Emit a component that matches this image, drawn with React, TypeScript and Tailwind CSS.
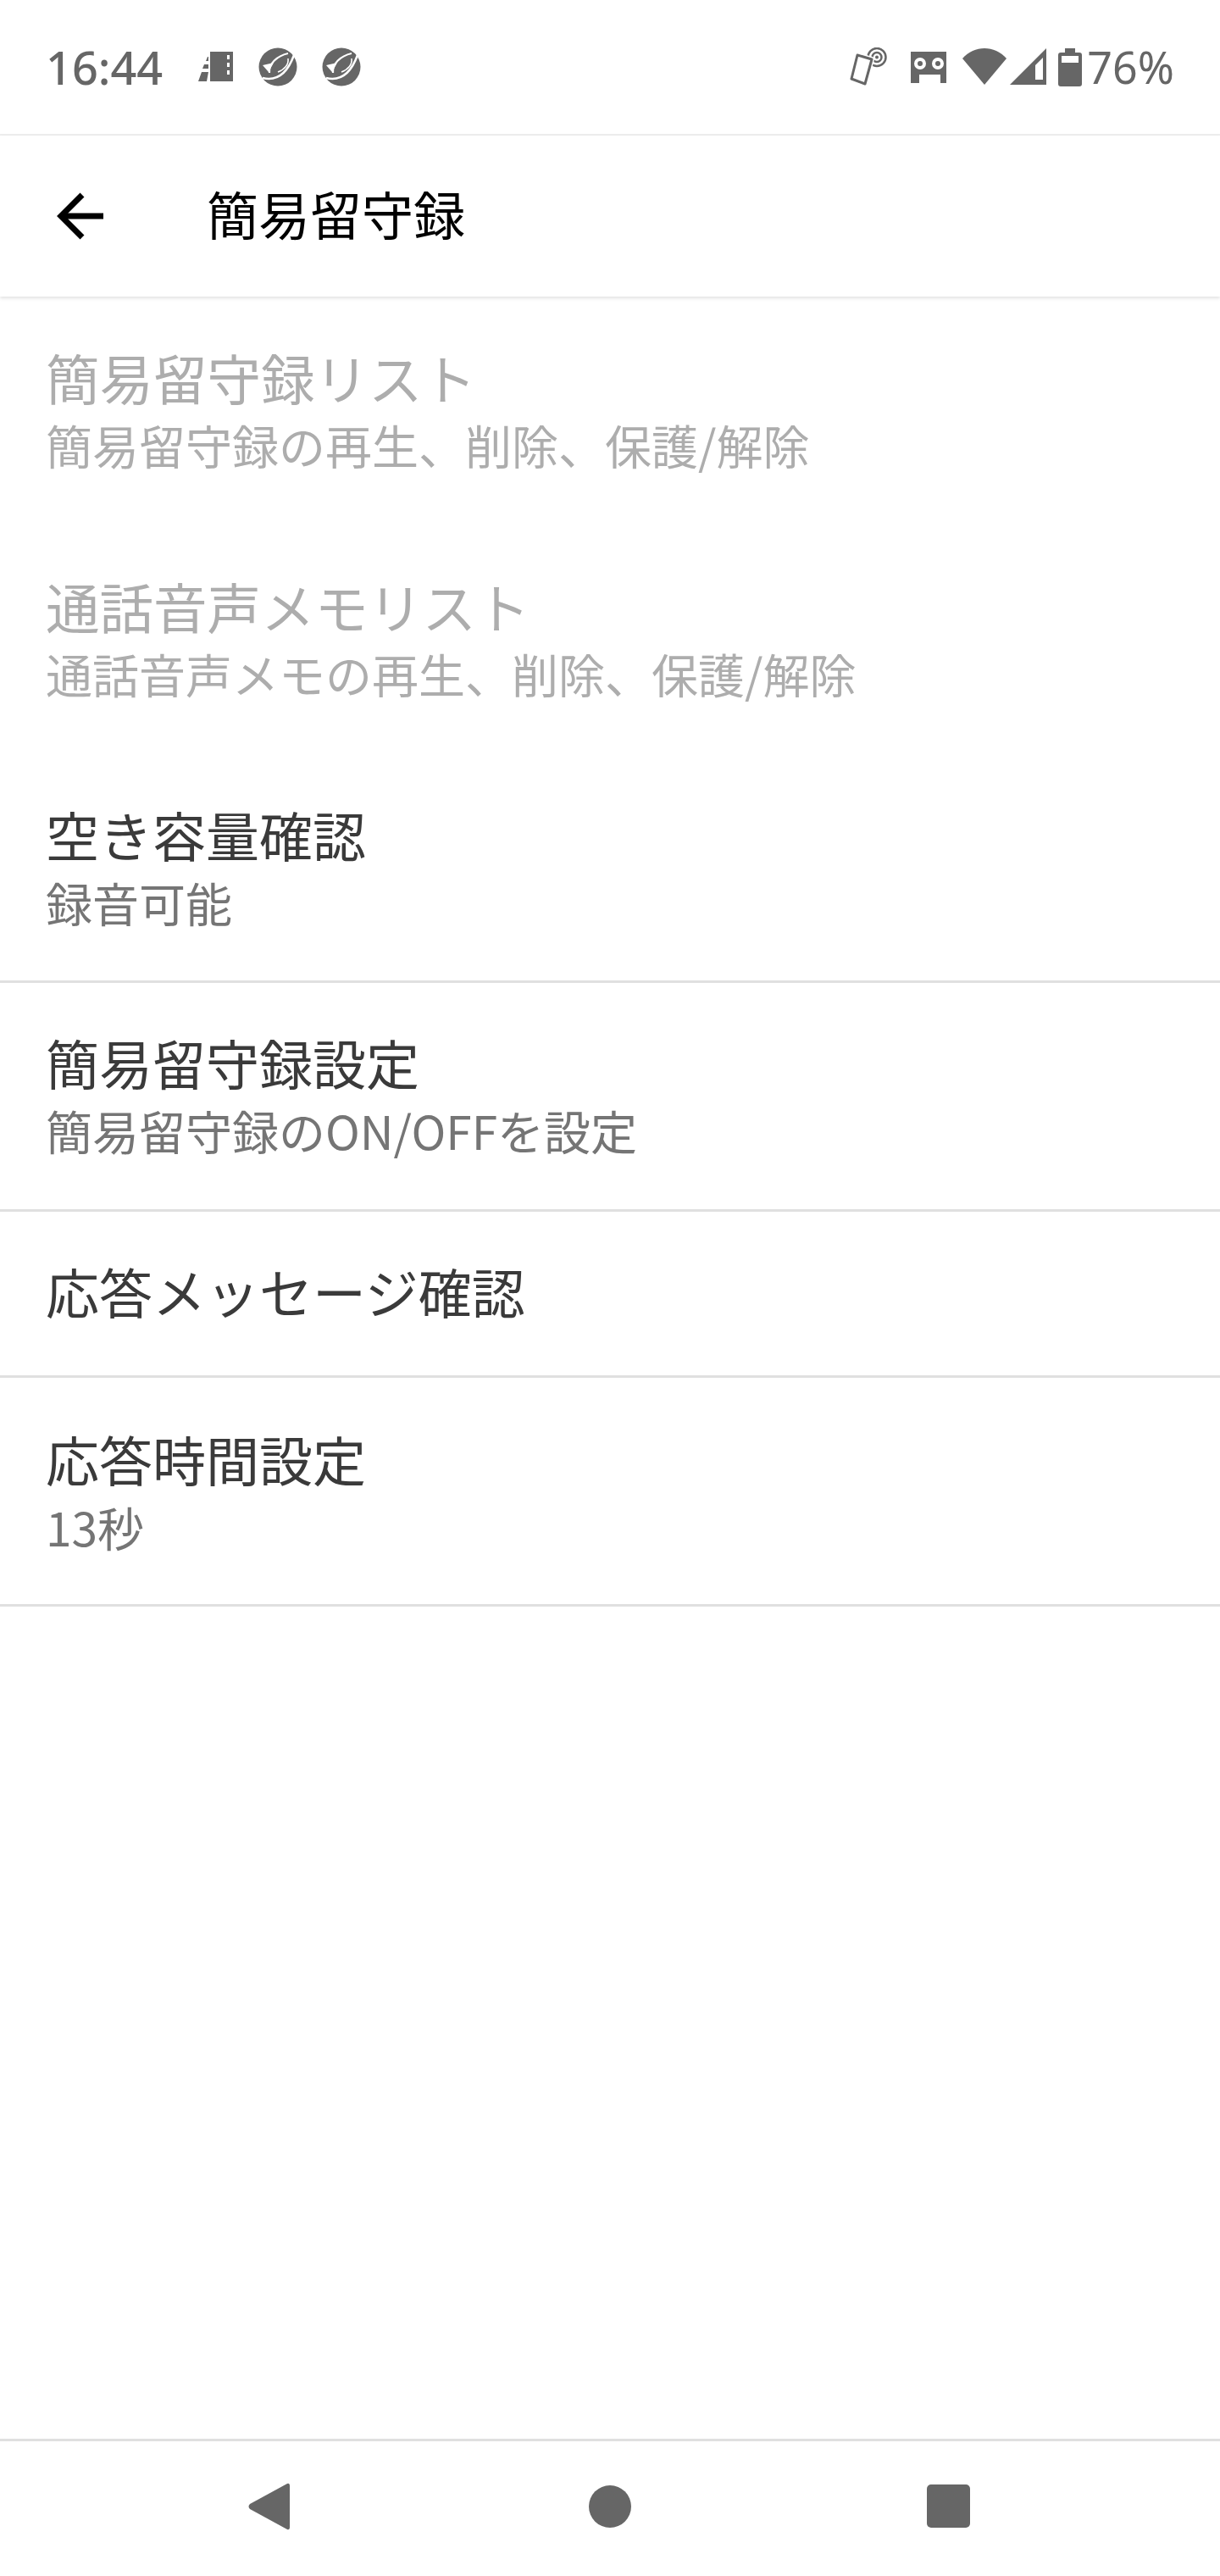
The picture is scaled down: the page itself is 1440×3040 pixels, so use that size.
const font = "font-['Noto_Sans_CJK_JP','Noto_Sans',sans-serif]";

function TrendIcon() {
  return (
    <svg width="46" height="46" viewBox="0 0 46 46">
      <circle cx="23" cy="23" r="22.5" fill="#666666" />
      <path d="M5 36Q30 42 42 9" fill="none" stroke="#ffffff" strokeWidth="2.5" />
      <path d="M13 30C12 19 22 10 35 7" fill="none" stroke="#ffffff" strokeWidth="2.2" />
      <path d="M35 13C36 20 31 26 23 29" fill="none" stroke="#ffffff" strokeWidth="1.5" />
      <path d="M5 21L18 18L12 29Z" fill="#ffffff" />
    </svg>
  );
}

function StatusBar() {
  return (
    <div className="h-[160px] shrink-0 border-b-[2px] border-[#eeeeee] flex items-center pl-[54px] pr-[54px]">
      <span className="font-['Noto_Sans',sans-serif] font-medium text-[54px] leading-none text-[#666666]">16:44</span>
      <div className="ml-[42px] flex items-center">
        <svg width="41" height="36" viewBox="0 0 41 36">
          <path d="M14 0H41V35H14Z M34 4V9H37V4Z M34 13V18H37V13Z M34 22V27H37V22Z" fill="#666666" fillRule="evenodd" />
          <path d="M0 35L4 24H12L10 35Z M5 20L7 15H12V20Z M9 11L11 6H12V11Z" fill="#666666" />
        </svg>
        <div className="ml-[30px] flex gap-[29px]">
          <TrendIcon />
          <TrendIcon />
        </div>
      </div>
      <div className="ml-auto flex items-center">
        <svg width="46" height="46" viewBox="0 0 46 46" fill="none" stroke="#666666">
          <circle cx="32" cy="11.5" r="10.5" strokeWidth="2.5" />
          <circle cx="32" cy="11.5" r="5.5" strokeWidth="2.5" />
          <circle cx="32" cy="11.5" r="2" fill="#666666" stroke="none" />
          <path d="M9 9L26 14L18 43L2 37Z" fill="#ffffff" stroke="#ffffff" strokeWidth="6" strokeLinejoin="round" />
          <path d="M9 9L26 14L18 43L2 37Z" fill="#ffffff" strokeWidth="3" strokeLinejoin="round" />
        </svg>
        <svg className="ml-[26px]" width="42" height="37" viewBox="0 0 42 37">
          <path d="M0 0H42V37H35V27H10V37H0Z" fill="#666666" />
          <circle cx="11" cy="14" r="5" fill="none" stroke="#ffffff" strokeWidth="4" />
          <circle cx="32" cy="14" r="5" fill="none" stroke="#ffffff" strokeWidth="4" />
        </svg>
        <svg className="ml-[19px]" width="52" height="44" viewBox="0 0 52 44">
          <path d="M0 12C14 -4 38 -4 52 12L26 43Z" fill="#666666" />
        </svg>
        <svg className="ml-[4px]" width="44" height="44" viewBox="0 0 44 44">
          <path d="M0 43L43 0V43Z" fill="#666666" />
          <path d="M30 20V37H39V11Z" fill="#ffffff" />
        </svg>
        <svg className="ml-[13px]" width="28" height="45" viewBox="0 0 28 45">
          <path d="M8 0H20V5H25Q28 5 28 8V42Q28 45 25 45H3Q0 45 0 42V8Q0 5 3 5H8Z" fill="#666666" />
          <rect x="4" y="9" width="20" height="8" fill="#ffffff" />
        </svg>
        <span className="ml-[6px] font-['Noto_Sans',sans-serif] text-[52px] leading-none text-[#666666]">76%</span>
      </div>
    </div>
  );
}

function Toolbar() {
  return (
    <div className="relative h-[190px] shrink-0 bg-white shadow-[0_2px_4px_rgba(0,0,0,0.12)] flex items-center">
      <svg className="ml-[66px]" width="58" height="58" viewBox="0 0 58 58" fill="none" stroke="#000000" strokeWidth="7">
        <path d="M56 29H6" />
        <path d="M31 4L6 29L31 54" />
      </svg>
      <span className="ml-[120px] pb-[8px] text-[61px] leading-none text-black">簡易留守録</span>
    </div>
  );
}

interface RowProps {
  title: string;
  sub?: string;
  disabled?: boolean;
  divider?: boolean;
  className: string;
}

function Row({ title, sub, disabled, divider, className }: RowProps) {
  return (
    <div className={`pl-[54px] shrink-0 ${divider ? 'border-b-[3px] border-[#e0e0e0]' : ''} ${className}`}>
      <div className={`leading-[80px] ${disabled ? 'text-[63.5px] text-[#adadad]' : 'text-[63px] text-[#3a3a3a]'}`}>{title}</div>
      {sub && (
        <div className={`text-[55px] leading-[80px] ${disabled ? 'text-[#adadad]' : 'text-[#757575]'}`}>{sub}</div>
      )}
    </div>
  );
}

function NavBar() {
  return (
    <div className="mt-auto h-[162px] shrink-0 border-t-[3px] border-[#e0e0e0] flex items-center justify-between pl-[293px] pr-[295px] pb-[6px]">
      <svg width="49" height="56" viewBox="0 0 49 56">
        <path d="M46 1Q49 0 49 4V52Q49 56 46 55L2 31Q-1 28 2 25Z" fill="#666666" />
      </svg>
      <div className="ml-[3px] w-[50px] h-[50px] rounded-full bg-[#666666]" />
      <div className="w-[51px] h-[51px] rounded-[5px] bg-[#666666]" />
    </div>
  );
}

export default function App() {
  return (
    <div className={`w-[1440px] h-[3040px] bg-white flex flex-col overflow-hidden ${font}`}>
      <StatusBar />
      <Toolbar />
      <Row title="簡易留守録リスト" sub="簡易留守録の再生、削除、保護/解除" disabled className="h-[268px] pt-[54px]" />
      <Row title="通話音声メモリスト" sub="通話音声メモの再生、削除、保護/解除" disabled className="h-[270px] pt-[56px]" />
      <Row title="空き容量確認" sub="録音可能" divider className="h-[272px] pt-[56px]" />
      <Row title="簡易留守録設定" sub="簡易留守録のON/OFFを設定" divider className="h-[270px] pt-[53px]" />
      <Row title="応答メッセージ確認" divider className="h-[196px] pt-[53px]" />
      <Row title="応答時間設定" sub="13秒" divider className="h-[270px] pt-[55px]" />
      <NavBar />
    </div>
  );
}
